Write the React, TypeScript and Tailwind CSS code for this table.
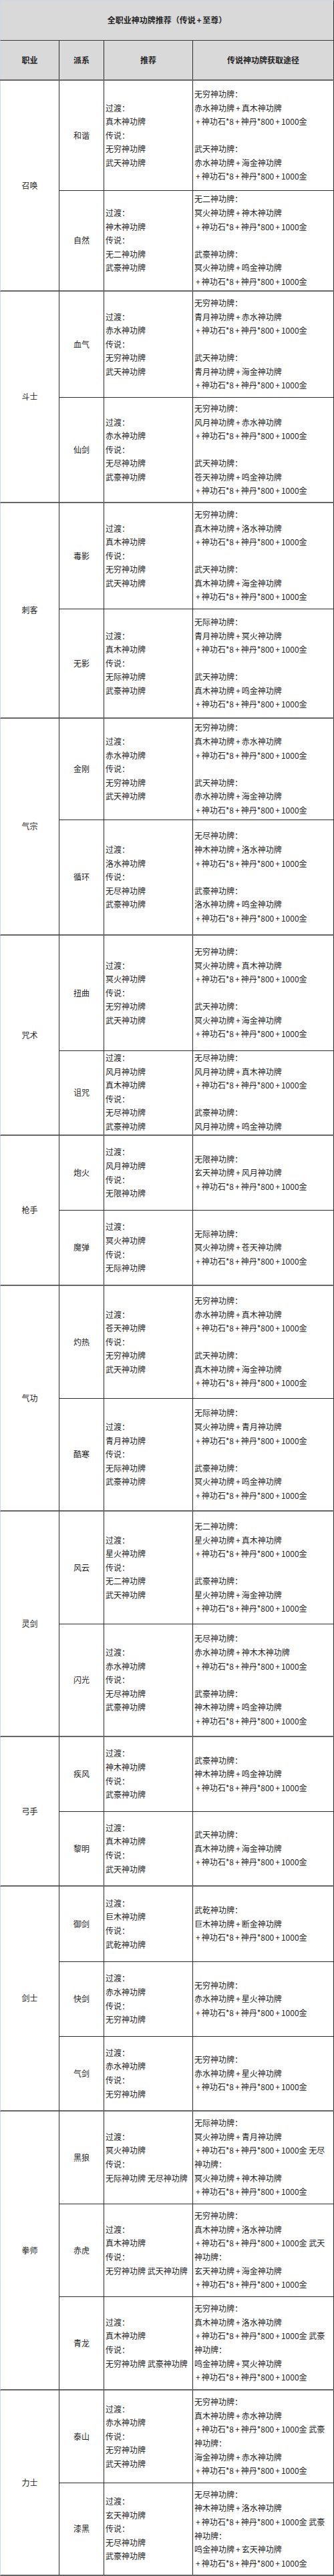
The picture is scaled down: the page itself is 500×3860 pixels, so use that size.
import React from 'react';

const S = '+神功石*8+神丹*800+1000金';

type Sub = { name: string; h: number; rec: string[]; src: string[]; top?: boolean };
type Group = { cls: string; subs: Sub[] };

const R = (a: string, b: string, c?: string) =>
  c ? ['过渡：', a, '传说：', b, c] : ['过渡：', a, '传说：', b];

const groups: Group[] = [
  {
    cls: '召唤',
    subs: [
      { name: '和谐', h: 165, rec: R('真木神功牌', '无穷神功牌', '武天神功牌'), src: ['无穷神功牌：', '赤水神功牌+真木神功牌', S, '', '武天神功牌：', '赤水神功牌+海金神功牌', S] },
      { name: '自然', h: 151, rec: R('神木神功牌', '无二神功牌', '武豪神功牌'), src: ['无二神功牌：', '冥火神功牌+神木神功牌', S, '', '武豪神功牌：', '冥火神功牌+鸣金神功牌', S] },
    ],
  },
  {
    cls: '斗士',
    subs: [
      { name: '血气', h: 159, rec: R('赤水神功牌', '无穷神功牌', '武天神功牌'), src: ['无穷神功牌：', '青月神功牌+赤水神功牌', S, '', '武天神功牌：', '青月神功牌+海金神功牌', S] },
      { name: '仙剑', h: 158, rec: R('赤水神功牌', '无尽神功牌', '武豪神功牌'), src: ['无穷神功牌：', '风月神功牌+赤水神功牌', S, '', '武天神功牌：', '苍天神功牌+鸣金神功牌', S] },
    ],
  },
  {
    cls: '刺客',
    subs: [
      { name: '毒影', h: 159, rec: R('真木神功牌', '无穷神功牌', '武天神功牌'), src: ['无穷神功牌：', '真木神功牌+洛水神功牌', S, '', '武天神功牌：', '真木神功牌+海金神功牌', S] },
      { name: '无影', h: 164, rec: R('真木神功牌', '无际神功牌', '武豪神功牌'), src: ['无际神功牌：', '青月神功牌+冥火神功牌', S, '', '武天神功牌：', '真木神功牌+鸣金神功牌', S] },
    ],
  },
  {
    cls: '气宗',
    subs: [
      { name: '金刚', h: 152, rec: R('赤水神功牌', '无穷神功牌', '武天神功牌'), src: ['无穷神功牌：', '真木神功牌+赤水神功牌', S, '', '武天神功牌：', '赤水神功牌+海金神功牌', S] },
      { name: '循环', h: 173, rec: R('洛水神功牌', '无尽神功牌', '武豪神功牌'), src: ['无尽神功牌：', '神木神功牌+洛水神功牌', S, '', '武豪神功牌：', '洛水神功牌+鸣金神功牌', S] },
    ],
  },
  {
    cls: '咒术',
    subs: [
      { name: '扭曲', h: 173, rec: R('冥火神功牌', '无穷神功牌', '武天神功牌'), src: ['无穷神功牌：', '冥火神功牌+真木神功牌', S, '', '武天神功牌：', '冥火神功牌+海金神功牌', S] },
      { name: '诅咒', h: 127, top: true, rec: ['过渡：', '风月神功牌', '真木神功牌', '传说：', '无尽神功牌', '武豪神功牌'], src: ['无尽神功牌：', '风月神功牌+真木神功牌', S, '', '武豪神功牌：', '风月神功牌+鸣金神功牌'] },
    ],
  },
  {
    cls: '枪手',
    subs: [
      { name: '炮火', h: 112, rec: R('风月神功牌', '无限神功牌'), src: ['无限神功牌：', '玄天神功牌+风月神功牌', S] },
      { name: '魔弹', h: 113, rec: R('冥火神功牌', '无际神功牌'), src: ['无际神功牌：', '冥火神功牌+苍天神功牌', S] },
    ],
  },
  {
    cls: '气功',
    subs: [
      { name: '灼热', h: 169, rec: R('苍天神功牌', '无穷神功牌', '武天神功牌'), src: ['无穷神功牌：', '赤水神功牌+真木神功牌', S, '', '武天神功牌：', '真木神功牌+海金神功牌', S] },
      { name: '酷寒', h: 169, rec: R('青月神功牌', '无际神功牌', '武豪神功牌'), src: ['无际神功牌：', '冥火神功牌+青月神功牌', S, '', '武豪神功牌：', '冥火神功牌+鸣金神功牌', S] },
    ],
  },
  {
    cls: '灵剑',
    subs: [
      { name: '风云', h: 169, rec: R('星火神功牌', '无二神功牌', '武天神功牌'), src: ['无二神功牌：', '星火神功牌+真木神功牌', S, '', '武豪神功牌：', '星火神功牌+海金神功牌', S] },
      { name: '闪光', h: 169, rec: R('赤水神功牌', '无尽神功牌', '武豪神功牌'), src: ['无尽神功牌：', '赤水神功牌+神木木神功牌', S, '', '武豪神功牌：', '神木神功牌+鸣金神功牌', S] },
    ],
  },
  {
    cls: '弓手',
    subs: [
      { name: '疾风', h: 112, rec: R('神木神功牌', '武豪神功牌'), src: ['武豪神功牌：', '神木神功牌+鸣金神功牌', S] },
      { name: '黎明', h: 112, rec: R('真木神功牌', '武天神功牌'), src: ['武天神功牌：', '真木神功牌+海金神功牌', S] },
    ],
  },
  {
    cls: '剑士',
    subs: [
      { name: '御剑', h: 113, rec: R('巨木神功牌', '武乾神功牌'), src: ['武乾神功牌：', '巨木神功牌+断金神功牌', S] },
      { name: '快剑', h: 112, rec: R('赤水神功牌', '无穷神功牌'), src: ['无穷神功牌：', '赤水神功牌+星火神功牌', S] },
      { name: '气剑', h: 112, rec: R('赤水神功牌', '无穷神功牌'), src: ['无穷神功牌：', '赤水神功牌+星火神功牌', S] },
    ],
  },
  {
    cls: '拳师',
    subs: [
      { name: '黑狼', h: 139, rec: R('冥火神功牌', '无际神功牌 无尽神功牌'), src: ['无际神功牌：', '冥火神功牌+青月神功牌', S + ' 无尽', '神功牌：', '冥火神功牌+神木神功牌', S] },
      { name: '赤虎', h: 139, rec: R('真木神功牌', '无穷神功牌 武天神功牌'), src: ['无穷神功牌：', '真木神功牌+洛水神功牌', S + ' 武天', '神功牌：', '玄天神功牌+海金神功牌', S] },
      { name: '青龙', h: 140, rec: R('真木神功牌', '无穷神功牌 武豪神功牌'), src: ['无穷神功牌：', '真木神功牌+洛水神功牌', S + ' 武豪', '神功牌：', '鸣金神功牌+冥火神功牌', S] },
    ],
  },
  {
    cls: '力士',
    subs: [
      { name: '泰山', h: 139, rec: R('赤水神功牌', '无穷神功牌', '武天神功牌'), src: ['无穷神功牌：', '真木神功牌+赤水神功牌', S + ' 武豪', '神功牌：', '海金神功牌+赤水神功牌', S] },
      { name: '漆黑', h: 139, rec: R('玄天神功牌', '无尽神功牌', '武豪神功牌'), src: ['无尽神功牌：', '神木神功牌+洛水神功牌', S + ' 武豪', '神功牌：', '鸣金神功牌+玄天神功牌', S] },
    ],
  },
];

function Txt({ s }: { s: string }) {
  if (s === '') return <>{'\u00a0'}</>;
  const parts = s.split('+');
  return (
    <>
      {parts.map((p, i) => (
        <React.Fragment key={i}>
          {i > 0 && <span className="inline-block w-[10.7px] text-center">+</span>}
          {p}
        </React.Fragment>
      ))}
    </>
  );
}

function Lines({ lines }: { lines: string[] }) {
  return (
    <div className="flex flex-col">
      {lines.map((l, i) => (
        <div key={i} className="whitespace-nowrap">
          <Txt s={l} />
        </div>
      ))}
    </div>
  );
}

export default function App() {
  return (
    <div className="w-[500px] bg-white font-['Noto_Sans_CJK_SC','Noto_Sans',sans-serif] text-[12px] leading-[20.6px] text-[#262626]">
      <div className="flex h-[61px] items-center justify-center border-t border-l border-r border-b border-t-[#d0d7e5] border-l-[#d0d7e5] border-r-[#2b2b2b] border-b-[#3a3a3a] bg-[#d9d9d9] font-bold text-[#1f1f1f]">
        全职业神功牌推荐（传说<Txt s="+" />至尊）
      </div>
      <div className="grid h-[60px] grid-cols-[89px_67px_133px_211px] border-b-2 border-b-[#666] bg-[#d9d9d9] font-bold text-[#1f1f1f]">
        <div className="flex items-center justify-center border-l border-r border-l-[#d0d7e5] border-r-[#2b2b2b]">职业</div>
        <div className="flex items-center justify-center border-r border-r-[#2b2b2b]">派系</div>
        <div className="flex items-center justify-center border-r border-r-[#2b2b2b]">推荐</div>
        <div className="flex items-center justify-center border-r border-r-[#2b2b2b]">传说神功牌获取途径</div>
      </div>
      {groups.map((g) => (
        <div key={g.cls} className="flex">
          <div className="flex w-[89px] shrink-0 items-center justify-center border-l border-r border-b-2 border-l-[#d0d7e5] border-r-[#2b2b2b] border-b-[#666]">
            {g.cls}
          </div>
          <div className="flex flex-1 flex-col">
            {g.subs.map((s, i) => {
              const last = i === g.subs.length - 1;
              return (
                <div
                  key={s.name}
                  className={
                    'grid grid-cols-[67px_133px_211px] overflow-hidden ' +
                    (last ? 'border-b-2 border-b-[#666]' : 'border-b border-b-[#2b2b2b]')
                  }
                  style={{ height: s.h }}
                >
                  <div className="flex items-center justify-center border-r border-r-[#2b2b2b]">{s.name}</div>
                  <div className={'flex overflow-hidden border-r border-r-[#2b2b2b] pl-[2px] ' + (s.top ? 'items-start' : 'items-center')}>
                    <Lines lines={s.rec} />
                  </div>
                  <div className={'flex overflow-hidden border-r border-r-[#2b2b2b] pl-[2px] ' + (s.top ? 'items-start' : 'items-center')}>
                    <Lines lines={s.src} />
                  </div>
                </div>
              );
            })}
          </div>
        </div>
      ))}
    </div>
  );
}
